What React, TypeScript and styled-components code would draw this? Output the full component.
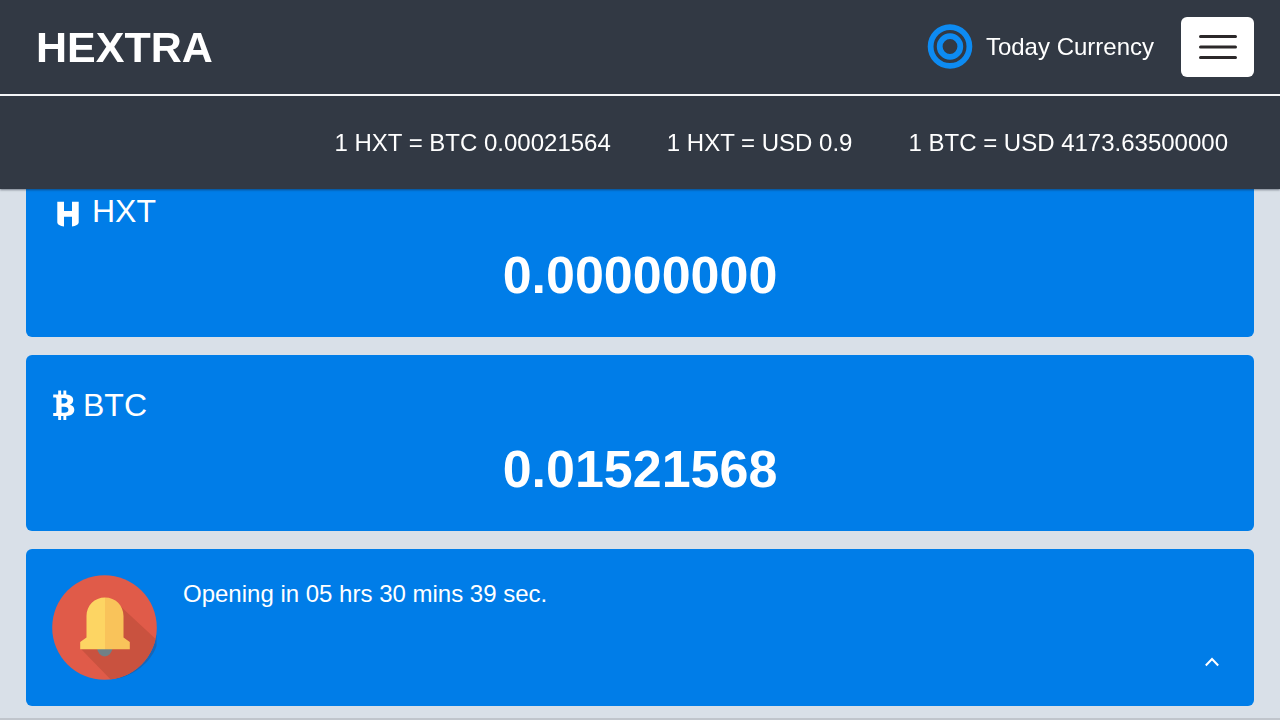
import React from "react";
import styled, { createGlobalStyle } from "styled-components";

const GlobalStyle = createGlobalStyle`
  *, *::before, *::after { box-sizing: border-box; }
  body {
    margin: 0;
    background: #d9e0e8;
    color: #fff;
    font-family: "Liberation Sans", Helvetica, Arial, sans-serif;
  }
  h1, h2, p, ul { margin: 0; padding: 0; }
`;

const Header = styled.header`
  position: fixed;
  top: 0;
  left: 0;
  right: 0;
  z-index: 10;
  background: #323944;
  box-shadow: 0 1px 2px rgba(20, 30, 45, 0.5);
`;

const TopBar = styled.div`
  display: flex;
  align-items: center;
  height: 96px;
  padding: 0 26px 0 36px;
  border-bottom: 2px solid #f4f6f8;
`;

const Brand = styled.a`
  margin-right: auto;
  color: #fff;
  font-size: 43px;
  line-height: 48px;
  font-weight: 700;
  text-decoration: none;
`;

const CurrencyLink = styled.a`
  display: flex;
  align-items: center;
  gap: 13px;
  margin-right: 27px;
  color: #fff;
  font-size: 24px;
  line-height: 32px;
  text-decoration: none;
`;

const MenuButton = styled.button`
  display: flex;
  align-items: center;
  justify-content: center;
  width: 73px;
  height: 60px;
  padding: 0;
  border: 0;
  border-radius: 6px;
  background: #fff;
  cursor: pointer;
`;

const Rates = styled.ul`
  display: flex;
  align-items: center;
  justify-content: flex-end;
  gap: 56px;
  height: 93px;
  padding: 0 52px;
  list-style: none;
  font-size: 24px;
  line-height: 32px;
`;

const Main = styled.main`
  display: flex;
  flex-direction: column;
  gap: 18px;
  padding: 161px 26px 12px;
  border-bottom: 2px solid #c0c5cc;
`;

const Card = styled.section`
  padding: 32px 26px;
  border-radius: 6px;
  background: #007de8;
`;

const CardTitle = styled.h2`
  display: flex;
  align-items: center;
  gap: 8px;
  font-size: 32px;
  line-height: 36px;
  font-weight: 400;
`;

const Balance = styled.p`
  margin-top: 16px;
  font-size: 52px;
  line-height: 60px;
  font-weight: 700;
  text-align: center;
`;

const NoticeCard = styled(Card)`
  display: flex;
  align-items: flex-start;
  gap: 24px;
  padding: 26px;
`;

const NoticeText = styled.p`
  flex: 1;
  padding-top: 3px;
  font-size: 24px;
  line-height: 32px;
`;

const CollapseButton = styled.button`
  display: flex;
  align-self: flex-end;
  align-items: center;
  justify-content: center;
  width: 32px;
  height: 36px;
  padding: 0;
  border: 0;
  background: transparent;
  color: #fff;
  cursor: pointer;
`;

const rates = ["1 HXT = BTC 0.00021564", "1 HXT = USD 0.9", "1 BTC = USD 4173.63500000"];

const RingsIcon = () => (
  <svg width="46" height="46" viewBox="0 0 46 46" fill="none" stroke="#0d8bf2" strokeWidth="5.8" aria-hidden="true">
    <circle cx="23" cy="22.500" r="19.400" />
    <circle cx="23" cy="22.500" r="10.300" />
  </svg>
);

const MenuIcon = () => (
  <svg width="40" height="28" viewBox="0 0 40 28" stroke="#2b2829" strokeWidth="3" strokeLinecap="round" aria-hidden="true">
    <path d="M2.500 3.500h35M2.500 14h35M2.500 24.500h35" />
  </svg>
);

const HextraIcon = () => (
  <svg width="32" height="32" viewBox="0 0 32 32" fill="#fff" aria-hidden="true">
    <path d="M5.300 6.800H12v9.200h8V6.800h6.700v20.400c0 2.200-3 3.800-6.700 4.300v-9.700h-8v9.700c-3.700-.5-6.700-2.100-6.700-4.300z" />
  </svg>
);

const BitcoinIcon = () => (
  <svg width="23" height="32" viewBox="0 0 23 32" aria-hidden="true">
    <path fill="#fff" d="M6.200 1.500h2.900v4h2.300v-4h2.900v4.100c4.200.4 6.900 2.100 6.900 5.500 0 2.200-1.200 3.900-3.400 4.700 2.900.7 4.500 2.500 4.500 5 0 3.900-2.900 5.900-8 6.200v3.900h-2.900V27H9.100v3.900H6.200V27H1.200v-3h2c.8 0 1.200-.4 1.200-1.100V9.600c0-.8-.4-1.200-1.200-1.200h-2V5.500h5z" />
    <path fill="#007de8" d="M9.600 8.900v5.500h1.900c2.700 0 4-.9 4-2.800s-1.300-2.700-3.800-2.700zM9.600 17.700v6h2.600c2.800 0 4.200-1 4.200-3s-1.500-3-4.400-3z" />
  </svg>
);

const BellIcon = () => (
  <svg width="107" height="105" viewBox="0 0 107 105" aria-hidden="true">
    <defs>
      <clipPath id="bell-disc">
        <circle cx="52.500" cy="52.500" r="52.300" />
      </clipPath>
    </defs>
    <path d="M104.500 60v11C99 87 82 101 63 104z" fill="#1767b8" />
    <circle cx="52.500" cy="52.500" r="52.300" fill="#e05b49" />
    <path clipPath="url(#bell-disc)" d="M66 29l44 41v40H64L29 74z" fill="#c9523f" />
    <path d="M45 73h15.500a7.800 9.500 0 0 1-15.500 0z" fill="#708086" />
    <path d="M53 22.500c-10.500 0-18.500 8-18.500 18.500v21.500L28.200 67v7.300H53z" fill="#fdd563" />
    <path d="M53 22.500c10.500 0 18.500 8 18.500 18.500v21.500L77.800 67v7.300H53z" fill="#f9c35a" />
  </svg>
);

const ChevronIcon = () => (
  <svg width="16" height="10" viewBox="0 0 16 10" fill="none" stroke="currentColor" strokeWidth="2" aria-hidden="true">
    <path d="M1.800 8.500L8 2l6.200 6.500" />
  </svg>
);

export default function App() {
  return (
    <>
      <GlobalStyle />
      <Header>
        <TopBar>
          <Brand href="#">HEXTRA</Brand>
          <CurrencyLink href="#rates">
            <RingsIcon />
            Today Currency
          </CurrencyLink>
          <MenuButton type="button" aria-label="Menu">
            <MenuIcon />
          </MenuButton>
        </TopBar>
        <Rates id="rates">
          {rates.map((rate) => (
            <li key={rate}>{rate}</li>
          ))}
        </Rates>
      </Header>
      <Main>
        <Card>
          <CardTitle>
            <HextraIcon />
            HXT
          </CardTitle>
          <Balance>0.00000000</Balance>
        </Card>
        <Card>
          <CardTitle>
            <BitcoinIcon />
            BTC
          </CardTitle>
          <Balance>0.01521568</Balance>
        </Card>
        <NoticeCard>
          <BellIcon />
          <NoticeText>Opening in 05 hrs 30 mins 39 sec.</NoticeText>
          <CollapseButton type="button" aria-label="Collapse">
            <ChevronIcon />
          </CollapseButton>
        </NoticeCard>
      </Main>
    </>
  );
}
